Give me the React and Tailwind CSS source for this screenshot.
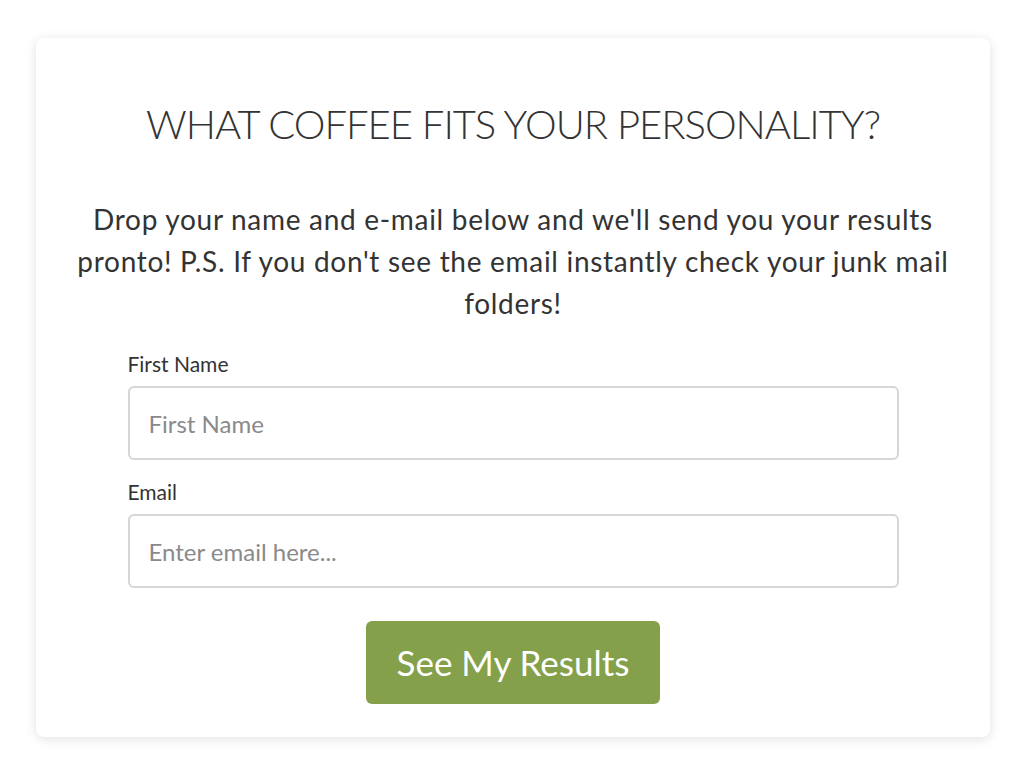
export default function App() {
  return (
    <div className="min-h-[775px] bg-white pt-[38px] px-[34px] pb-[38px]" style={{ fontFamily: "Lato, 'Open Sans', sans-serif" }}>
      <div className="ml-[2px] w-[954px] h-[699px] rounded-lg bg-white shadow-[0_2px_12px_rgba(0,0,0,0.12)] flex flex-col items-center">
        <h1 className="mt-[62px] text-[40px] leading-[48px] font-light text-[#333333] tracking-[-1px]">WHAT COFFEE FITS YOUR PERSONALITY?</h1>
        <p className="mt-[50px] px-[30px] text-center text-[28px] leading-[42px] tracking-[0.7px] text-[#333333]">
          Drop your name and e-mail below and we'll send you your results pronto! P.S. If you don't see the email instantly check your junk mail folders!
        </p>
        <form className="w-[771px] mt-[26px] flex flex-col" onSubmit={(e) => e.preventDefault()}>
          <label className="text-[21px] leading-[28px] text-[#333333]">First Name</label>
          <input type="text" placeholder="First Name" className="mt-[8px] h-[74px] rounded-md border-2 border-[#d6d6d6] px-[19px] text-[24px] text-[#333] placeholder:text-[#8a8a8a] outline-none" />
          <label className="mt-[18px] text-[21px] leading-[28px] text-[#333333]">Email</label>
          <input type="email" placeholder="Enter email here..." className="mt-[8px] h-[74px] rounded-md border-2 border-[#d6d6d6] px-[19px] text-[24px] text-[#333] placeholder:text-[#8a8a8a] outline-none" />
          <div className="flex justify-center mt-[33px]">
            <button type="submit" className="w-[294px] h-[83px] rounded-md bg-[#84a04a] text-white text-[35px]">See My Results</button>
          </div>
        </form>
      </div>
    </div>
  );
}
